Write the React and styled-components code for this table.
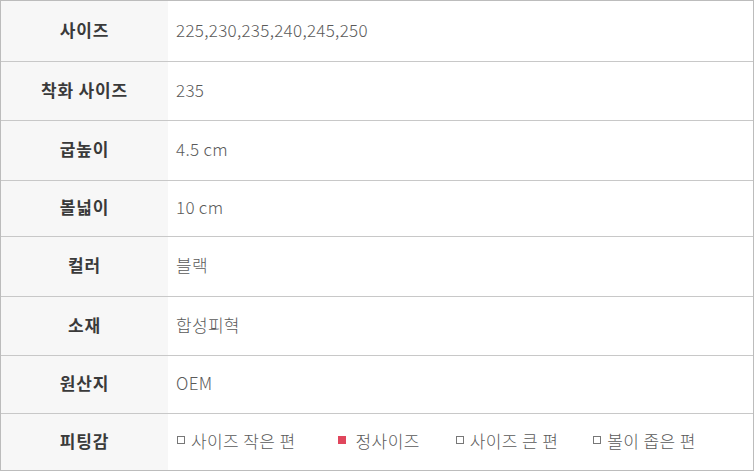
import React from 'react';
import styled, {createGlobalStyle} from 'styled-components';

const GlobalStyle = createGlobalStyle`
  html, body {
    margin: 0;
    padding: 0;
    background: #ffffff;
  }
  body {
    font-family: "Noto Sans CJK KR", "Noto Sans", sans-serif;
  }
`;

const rows = [
  {label: '사이즈', value: '225,230,235,240,245,250', height: 61},
  {label: '착화 사이즈', value: '235', height: 59},
  {label: '굽높이', value: '4.5 cm', height: 60},
  {label: '볼넓이', value: '10 cm', height: 56},
  {label: '컬러', value: '블랙', height: 60},
  {label: '소재', value: '합성피혁', height: 59},
  {label: '원산지', value: 'OEM', height: 58}
];

const fits = [
  {text: '사이즈 작은 편', checked: false},
  {text: '정사이즈', checked: true},
  {text: '사이즈 큰 편', checked: false},
  {text: '볼이 좁은 편', checked: false}
];

function App() {
  return (
    <>
      <GlobalStyle />
      <Table>
        {rows.map(row => (
          <Row key={row.label} $height={row.height}>
            <Label>{row.label}</Label>
            <Value>{row.value}</Value>
          </Row>
        ))}
        <Row $height={56} $last>
          <Label>피팅감</Label>
          <FitList>
            {fits.map(fit => (
              <FitItem key={fit.text}>
                <Box $checked={fit.checked} />
                {fit.text}
              </FitItem>
            ))}
          </FitList>
        </Row>
      </Table>
    </>
  );
}

const Table = styled.div`
  width: 754px;
  box-sizing: border-box;
  border: 1px solid #bcbcbc;
  display: flex;
  flex-direction: column;
`;

const Row = styled.div`
  display: flex;
  height: ${props => props.$height}px;
  box-sizing: border-box;
  border-bottom: ${props => (props.$last ? 'none' : '1px solid #c8c8c8')};
`;

const Label = styled.div`
  width: 167px;
  flex-shrink: 0;
  box-sizing: border-box;
  padding-bottom: 4px;
  background: #f7f7f7;
  display: flex;
  align-items: center;
  justify-content: center;
  font-size: 17px;
  font-weight: 700;
  letter-spacing: 0.8px;
  color: #3a3a3a;
`;

const Value = styled.div`
  flex: 1;
  display: flex;
  align-items: center;
  padding: 0 0 4px 8px;
  font-size: 17px;
  font-weight: 300;
  letter-spacing: 0.3px;
  color: #5a5a5a;
`;

const FitList = styled(Value)`
  letter-spacing: 0.4px;
`;

const FitItem = styled.span`
  display: inline-flex;
  align-items: center;
  margin-right: 41px;
  &:nth-child(2) {
    margin-right: 35px;
  }
  &:nth-child(3) {
    margin-right: 34px;
  }
`;

const Box = styled.span`
  width: 8px;
  height: 8px;
  box-sizing: border-box;
  margin: 0 ${props => (props.$checked ? 10 : 6)}px 0 1px;
  border: 1px solid ${props => (props.$checked ? '#e0465c' : '#777777')};
  background: ${props => (props.$checked ? '#e0465c' : 'transparent')};
`;

export default App;
